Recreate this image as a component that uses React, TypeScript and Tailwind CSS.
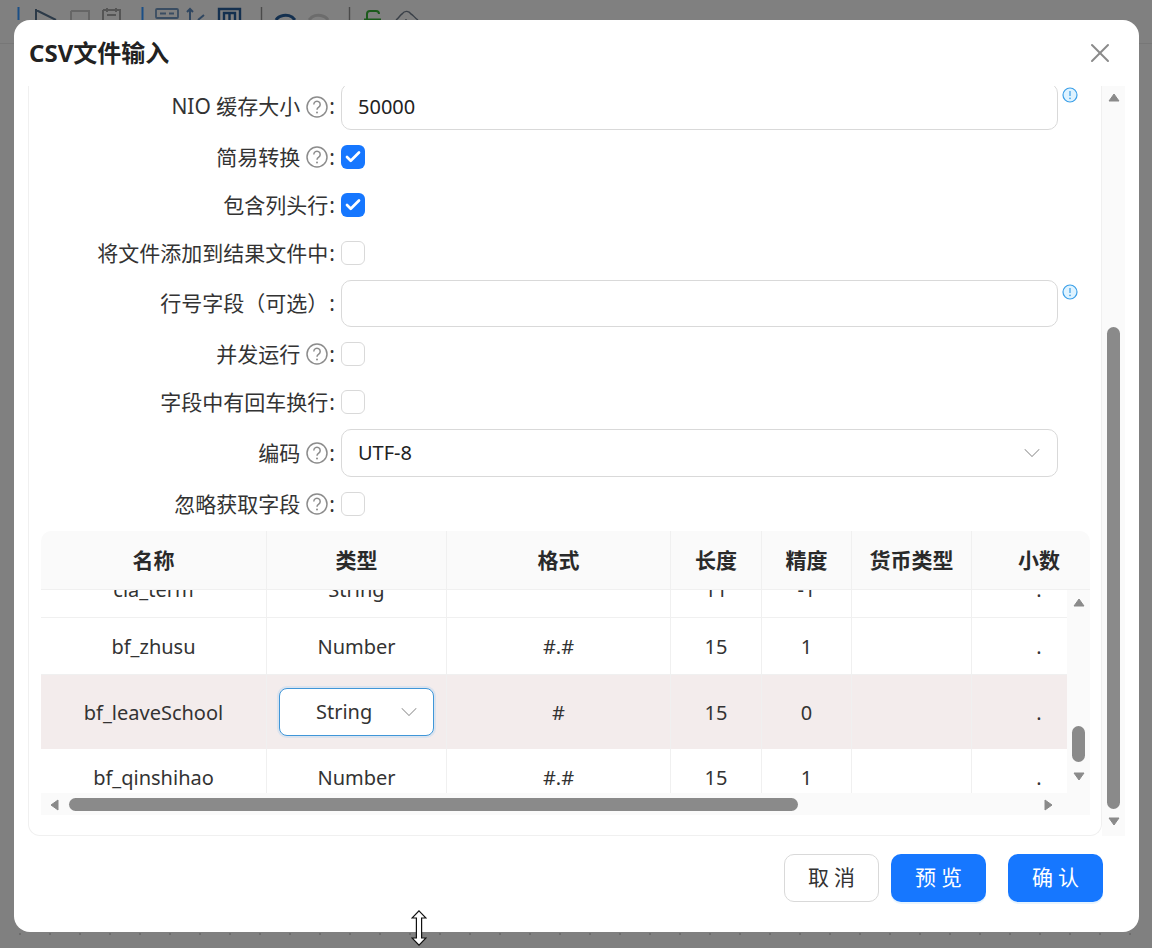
import { Check, ChevronDown, X } from "lucide-react";

const font = "font-['Noto_Sans','Noto_Sans_CJK_SC',sans-serif]";
const cols = "grid grid-cols-[226px_180px_224px_91px_90px_120px_134px]";

function Help() {
  return (
    <svg width="22" height="22" viewBox="0 0 22 22" className="ml-[6px] shrink-0">
      <circle cx="11" cy="11" r="10" fill="none" stroke="#8c8c8c" strokeWidth="1.5" />
      <path d="M7.8 8.4a3.2 3.2 0 1 1 5 2.7c-1 .7-1.8 1.2-1.8 2.7" fill="none" stroke="#8c8c8c" strokeWidth="1.5" />
      <circle cx="11" cy="16.6" r="1" fill="#8c8c8c" />
    </svg>
  );
}

function Info() {
  return (
    <svg width="16" height="16" viewBox="0 0 16 16" className="shrink-0">
      <circle cx="8" cy="8" r="7" fill="#dff3ff" stroke="#3b9fe8" strokeWidth="1.2" />
      <path d="M8 4v5" stroke="#3b9fe8" strokeWidth="1.2" />
      <circle cx="8" cy="11.4" r=".8" fill="#3b9fe8" />
    </svg>
  );
}

function Box({ on = false }: { on?: boolean }) {
  return on ? (
    <span className="flex h-[24px] w-[24px] items-center justify-center rounded-[6px] bg-[#1677ff]">
      <Check size={18} strokeWidth={3.6} color="#fff" />
    </span>
  ) : (
    <span className="block h-[24px] w-[24px] rounded-[6px] border border-[#d9d9d9] bg-white" />
  );
}

function Row({ label, help = false, height, children, info = false, className = "" }: { label: string; help?: boolean; height: number; children: React.ReactNode; info?: boolean; className?: string }) {
  return (
    <div className={`flex items-center ${className}`} style={{ height }}>
      <div className="flex w-[306px] items-center justify-end text-[21px] leading-none text-[#333]">
        <span className="whitespace-pre">{label}</span>
        {help && <Help />}
        <span className="ml-[1px]">:</span>
      </div>
      <div className="ml-[6px] w-[717px]">{children}</div>
      {info && (
        <div className="ml-[4px] self-start pt-[4px]">
          <Info />
        </div>
      )}
    </div>
  );
}

function Input({ value = "" }: { value?: string }) {
  return <div className="flex h-[47px] items-center rounded-[10px] border border-[#d9d9d9] bg-white px-[16px] text-[20px] text-[#222]">{value}</div>;
}

function Tri({ dir }: { dir: "up" | "down" | "left" | "right" }) {
  const pts = { up: "6,1 11,8 1,8", down: "1,1 11,1 6,8", left: "9,1 9,11 2,6", right: "2,1 2,11 9,6" }[dir];
  return (
    <svg width="12" height="12" viewBox="0 0 12 12" className="shrink-0">
      <polygon points={pts} fill="#8a8a8a" stroke="#8a8a8a" strokeLinejoin="round" />
    </svg>
  );
}

function Cell({ children, line = true }: { children?: React.ReactNode; line?: boolean }) {
  return (
    <div className={`flex items-center justify-center ${line ? "border-r border-[#f0f0f0]" : ""}`}>
      {typeof children === "string" ? <span className="pt-[2px]">{children}</span> : children}
    </div>
  );
}

function DataRow({ name, type, fmt, len, prec, hl = false, h = 57 }: { name: string; type: React.ReactNode; fmt: string; len: string; prec: string; hl?: boolean; h?: number }) {
  return (
    <div className={`${cols} text-[20px] text-[#333] ${hl ? "bg-[#f3ecec]" : "border-b border-[#f0f0f0]"}`} style={{ height: h }}>
      <Cell>{name}</Cell>
      <Cell>{type}</Cell>
      <Cell>{fmt}</Cell>
      <Cell>{len}</Cell>
      <Cell>{prec}</Cell>
      <Cell />
      <Cell line={false}>.</Cell>
    </div>
  );
}

function Toolbar() {
  return (
    <svg width="460" height="20" viewBox="0 0 460 20" className="absolute left-0 top-0" fill="none" strokeWidth="2">
      <path d="M18.5 7v13M142.5 7v13" stroke="#1b4f86" />
      <path d="M36 9v11M36 10l20 10" stroke="#2c3a48" />
      <path d="M71 11h18v9M71 11v9" stroke="#666" />
      <path d="M103 10h17v10M103 10v10M107 8v4M116 8v4M107 15h9" stroke="#555" />
      <rect x="156" y="9" width="22" height="9" rx="1" stroke="#3a4d62" strokeWidth="1.8" />
      <path d="M160 13.5h6M169 13.5h5" stroke="#3a4d62" />
      <path d="M190 20v-11M187 12l3-3 3 3M204 15l-6 5" stroke="#2f4660" />
      <path d="M219 20V9h21v11M224 20v-7h11v7M229.5 14v6" stroke="#14304f" strokeWidth="2.4" />
      <path d="M261.5 7v13M349.5 7v13" stroke="#4a4a4a" strokeWidth="1.4" />
      <path d="M276 20c3-5 11-6 16-3l3 3" stroke="#14304f" strokeWidth="3" />
      <path d="M328 20c-3-5-11-6-16-3l-3 3" stroke="#6c6c6c" strokeWidth="3" />
      <path d="M367 20v-6c0-2 1-3 3-3h6c2 0 3 1 3 3M364 19.5h17" stroke="#1c5a1c" />
      <path d="M396 20c3-2 4-5 6-6 3-4 7-3 9 0 2 1 4 4 7 6M406 20v-1" stroke="#3a4048" strokeWidth="1.4" />
    </svg>
  );
}

export default function App() {
  return (
    <div className={`relative h-[948px] w-[1152px] overflow-hidden bg-[#808080] pl-[14px] pt-[20px] ${font}`}>
      <Toolbar />
      <div className="absolute inset-x-0 top-[43px] h-px bg-[#777]" />
      <div className="absolute inset-x-0 top-[933px] h-[2px] bg-[linear-gradient(90deg,#6c6c6c_2px,transparent_2px)] bg-[length:30px_2px] bg-[position:19px_0]" />
      <div className="relative flex h-[912px] w-[1125px] flex-col rounded-[16px] bg-white">
        <div className="flex h-[66px] shrink-0 items-center justify-between pl-[15px] pr-[23px]">
          <h1 className="text-[24px] font-bold leading-none text-[#222]">CSV文件输入</h1>
          <X size={32} strokeWidth={1.5} color="#8a8a8a" />
        </div>

        <div className="ml-[14px] flex h-[750px] shrink-0">
          <div className="h-full w-[1074px] overflow-hidden rounded-b-[12px] border-x border-b border-[#f0f0f0]">
            <div className="-mt-[3px]">
              <Row label="NIO 缓存大小" help height={47} info>
                <Input value="50000" />
              </Row>
              <Row label="简易转换" help height={24} className="mt-[15px]">
                <Box on />
              </Row>
              <Row label="包含列头行" height={24} className="mt-[24px]">
                <Box on />
              </Row>
              <Row label="将文件添加到结果文件中" height={24} className="mt-[24px]">
                <Box />
              </Row>
              <Row label="行号字段（可选）" height={47} info className="mt-[15px]">
                <Input />
              </Row>
              <Row label="并发运行" help height={24} className="mt-[15px]">
                <Box />
              </Row>
              <Row label="字段中有回车换行" height={24} className="mt-[24px]">
                <Box />
              </Row>
              <Row label="编码" help height={48} className="mt-[15px]">
                <div className="flex h-[48px] items-center justify-between rounded-[10px] border border-[#d9d9d9] bg-white pl-[16px] pr-[11px] text-[20px] text-[#222]">
                  UTF-8
                  <ChevronDown size={28} strokeWidth={0.9} color="#9a9a9a" />
                </div>
              </Row>
              <Row label="忽略获取字段" help height={24} className="mt-[15px]">
                <Box />
              </Row>
            </div>

            <div className="ml-[12px] mt-[15px] w-[1049px] overflow-hidden rounded-t-[10px]">
              <div className={`${cols} h-[59px] border-b border-[#f0f0f0] bg-[#fafafa] text-[21px] font-bold text-[#2a2a2a]`}>
                <Cell>名称</Cell>
                <Cell>类型</Cell>
                <Cell>格式</Cell>
                <Cell>长度</Cell>
                <Cell>精度</Cell>
                <Cell>货币类型</Cell>
                <Cell line={false}>小数</Cell>
              </div>
              <div className="flex h-[225px]">
                <div className="w-[1026px] shrink-0">
                  <div className="h-[203px] overflow-hidden">
                    <div className="-mt-[29px] w-[1064px]">
                      <DataRow name="cia_term" type="String" fmt="" len="11" prec="-1" />
                      <DataRow name="bf_zhusu" type="Number" fmt="#.#" len="15" prec="1" />
                      <DataRow
                        name="bf_leaveSchool"
                        hl
                        h={74}
                        fmt="#"
                        len="15"
                        prec="0"
                        type={
                          <div className="flex h-[48px] w-[155px] items-center justify-between rounded-[8px] border border-[#4096d8] bg-white pl-[36px] pr-[10px] shadow-[0_0_0_2px_rgba(5,145,255,0.1)]">
                            String
                            <ChevronDown size={28} strokeWidth={0.9} color="#9a9a9a" />
                          </div>
                        }
                      />
                      <DataRow name="bf_qinshihao" type="Number" fmt="#.#" len="15" prec="1" />
                    </div>
                  </div>
                  <div className="flex h-[23px] items-center bg-[#fafafa] pl-[8px] pr-[12px]">
                    <Tri dir="left" />
                    <div className="ml-[8px] h-[13px] w-[729px] rounded-full bg-[#8a8a8a]" />
                    <div className="flex-1" />
                    <Tri dir="right" />
                  </div>
                </div>
                <div className="flex h-full w-[23px] flex-col items-center bg-[#fafafa] pt-[8px]">
                  <Tri dir="up" />
                  <div className="mt-[116px] h-[36px] w-[13px] rounded-full bg-[#8a8a8a]" />
                  <div className="mt-[10px]">
                    <Tri dir="down" />
                  </div>
                </div>
              </div>
            </div>
          </div>

          <div className="flex h-full w-[23px] flex-col items-center bg-[#fafafa] pt-[7px]">
            <Tri dir="up" />
            <div className="mt-[222px] h-[482px] w-[13px] rounded-full bg-[#8a8a8a]" />
            <div className="mt-[8px]">
              <Tri dir="down" />
            </div>
          </div>
        </div>

        <div className="ml-[770px] mt-[18px] flex text-[21px]">
          <button className="h-[48px] w-[95px] rounded-[10px] border border-[#d9d9d9] bg-white pl-[5px] tracking-[5px] text-[#333]">取消</button>
          <button className="ml-[12px] h-[48px] w-[95px] rounded-[10px] bg-[#1677ff] pl-[5px] tracking-[5px] text-white shadow-[0_2px_0_rgba(5,145,255,0.1)]">预览</button>
          <button className="ml-[22px] h-[48px] w-[95px] rounded-[10px] bg-[#1677ff] pl-[5px] tracking-[5px] text-white shadow-[0_2px_0_rgba(5,145,255,0.1)]">确认</button>
        </div>
      </div>

      <svg width="16" height="36" viewBox="0 0 16 36" className="absolute left-[411px] top-[910px]">
        <path d="M8 .8 15 8H10.6V28H15L8 35.2 1 28H5.4V8H1Z" fill="#fff" stroke="#111" strokeWidth="1.2" />
      </svg>
    </div>
  );
}
